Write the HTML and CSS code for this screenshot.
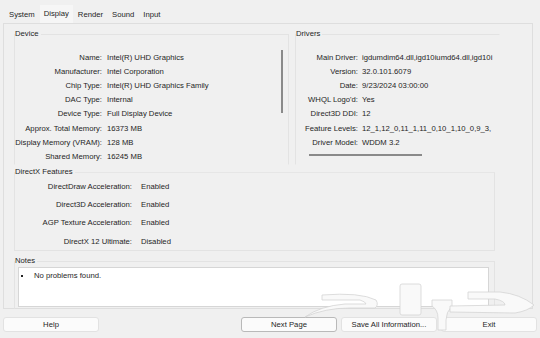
FILE: index.html
```html
<!DOCTYPE html>
<html lang="en">
<head>
    <meta charset="UTF-8">
    <meta name="viewport" content="width=device-width, initial-scale=1.0">
    <title>DirectX Diagnostic Tool</title>
    <link rel="stylesheet" href="styles.css">
</head>
<body>
    <div class="tabs">
        <span class="tab">System</span>
        <span class="tab active">Display</span>
        <span class="tab">Render</span>
        <span class="tab">Sound</span>
        <span class="tab">Input</span>
    </div>

    <div class="panel">
        <div class="top">
            <fieldset class="box device">
                <legend>Device</legend>
                <div class="boxBody">
                    <div class="rows">
                        <div class="row"><span class="lbl">Name:</span><span>Intel(R) UHD Graphics</span></div>
                        <div class="row"><span class="lbl">Manufacturer:</span><span>Intel Corporation</span></div>
                        <div class="row"><span class="lbl">Chip Type:</span><span>Intel(R) UHD Graphics Family</span></div>
                        <div class="row"><span class="lbl">DAC Type:</span><span>Internal</span></div>
                        <div class="row"><span class="lbl">Device Type:</span><span>Full Display Device</span></div>
                        <div class="row"><span class="lbl">Approx. Total Memory:</span><span>16373 MB</span></div>
                        <div class="row"><span class="lbl">Display Memory (VRAM):</span><span>128 MB</span></div>
                        <div class="row"><span class="lbl">Shared Memory:</span><span>16245 MB</span></div>
                    </div>
                    <div class="vscroll"></div>
                </div>
            </fieldset>

            <fieldset class="box drivers">
                <legend>Drivers</legend>
                <div class="rows">
                    <div class="row"><span class="lbl">Main Driver:</span><span>igdumdim64.dll,igd10iumd64.dll,igd10i</span></div>
                    <div class="row"><span class="lbl">Version:</span><span>32.0.101.6079</span></div>
                    <div class="row"><span class="lbl">Date:</span><span>9/23/2024 03:00:00</span></div>
                    <div class="row"><span class="lbl">WHQL Logo'd:</span><span>Yes</span></div>
                    <div class="row"><span class="lbl">Direct3D DDI:</span><span>12</span></div>
                    <div class="row"><span class="lbl">Feature Levels:</span><span>12_1,12_0,11_1,11_0,10_1,10_0,9_3,</span></div>
                    <div class="row"><span class="lbl">Driver Model:</span><span>WDDM 3.2</span></div>
                </div>
                <div class="hscroll"></div>
            </fieldset>
        </div>

        <fieldset class="box features">
            <legend>DirectX Features</legend>
            <div class="row"><span class="lbl">DirectDraw Acceleration:</span><span>Enabled</span></div>
            <div class="row"><span class="lbl">Direct3D Acceleration:</span><span>Enabled</span></div>
            <div class="row"><span class="lbl">AGP Texture Acceleration:</span><span>Enabled</span></div>
            <div class="row"><span class="lbl">DirectX 12 Ultimate:</span><span>Disabled</span></div>
        </fieldset>

        <fieldset class="box notes">
            <legend>Notes</legend>
            <div class="notesArea">
                <div class="note"><span class="bullet"></span>No problems found.</div>
            </div>
        </fieldset>
    </div>

    <div class="buttons">
        <button class="btn">Help</button>
        <button class="btn btnDefault">Next Page</button>
        <button class="btn">Save All Information...</button>
        <button class="btn">Exit</button>
    </div>

    <!-- watermark stamped over the screenshot -->
    <svg class="stamp" viewBox="0 0 240 60" width="240" height="60">
        <g fill="#f9f9f9" stroke="#d4d4d4" stroke-width="0.8">
            <path d="M5,39 Q25,30 50,30 L75,30 Q79,27 76,22 Q60,14 22,17 L22,22 L60,22 Q66,24 66,26 L45,26 Q20,28 5,39 Z"/>
            <rect x="100" y="6" width="21" height="31" rx="2"/>
            <path d="M132,22 L152,22 L152,28 Q146,34 146,42 L146,52 L138,52 L138,40 Q138,32 132,28 Z"/>
            <path d="M150,34 L215,35 Q228,33 234,27 Q220,16 200,14 L168,14 L168,21 L195,21 Q205,23 205,27 L150,28 Z"/>
        </g>
    </svg>
</body>
</html>
```

FILE: styles.css
```css
body {
    margin: 0;
    width: 540px;
    height: 338px;
    overflow: hidden;
    position: relative;
    background: #f0f0f0;
    color: #1e1e1e;
    font-family: "Liberation Sans", Arial, sans-serif;
    font-size: 7.7px;
}

.tabs {
    display: flex;
    align-items: flex-end;
    height: 23px;
    padding-left: 5px;
}
.tab {
    padding: 0 4px 3px;
    margin-right: 1px;
    line-height: 10px;
}
.tab.active {
    padding-bottom: 4px;
    padding-top: 4px;
    background: #f6f6f6;
}

.panel {
    box-sizing: border-box;
    margin-left: 3px;
    width: 530px;
    height: 286px;
    border: 1px solid #dedede;
    padding: 5px 0 0 10px;
}

.top {
    display: flex;
    height: 138px;
}

.box {
    margin: 0;
    padding: 0;
    min-width: 0;
    border: 1px solid #e3e3e3;
}
.box legend {
    padding: 0 2px 0 0;
    line-height: 10px;
}

.device {
    width: 275px;
    height: 136px;
    box-sizing: border-box;
    padding-top: 11px;
    border-bottom-color: transparent;
}
.boxBody {
    display: flex;
}
.rows {
    flex: 1;
    min-width: 0;
}
.vscroll {
    width: 2px;
    height: 63px;
    margin-right: 5px;
    background: #8a8a8a;
}

.drivers {
    margin-left: 6px;
    width: 205px;
    height: 136px;
    box-sizing: border-box;
    padding-top: 11px;
    border-bottom-color: transparent;
    border-right-color: transparent;
}
.hscroll {
    width: 113px;
    height: 2px;
    margin: 5px 0 0 13px;
    background: #8a8a8a;
}

.row {
    display: flex;
    height: 14.2px;
    align-items: center;
    white-space: nowrap;
}
.lbl {
    flex: none;
    width: 87px;
    margin-right: 5px;
    text-align: right;
}
.drivers .lbl {
    width: 62px;
    margin-right: 4px;
}

.features {
    width: 481px;
    box-sizing: border-box;
    border-top-color: #e6e6e6;
}
.features .row {
    height: 18.3px;
}
.features .lbl {
    width: 117px;
    margin-right: 9px;
}

.notes {
    margin-top: 5px;
    width: 481px;
    box-sizing: border-box;
    padding-bottom: 1px;
    border-bottom-color: transparent;
}
.notesArea {
    margin: 1px 0 0 3px;
    width: 471px;
    height: 40px;
    box-sizing: border-box;
    background: #fff;
    border: 1px solid #d6d6d6;
    padding: 3px 0 0 2px;
}
.note {
    display: flex;
    align-items: center;
    line-height: 10px;
}
.bullet {
    width: 2px;
    height: 2px;
    margin-right: 11px;
    background: #222;
}

.buttons {
    display: flex;
    gap: 4px;
    margin-top: 8px;
    padding: 0 3px;
}
.btn {
    width: 96px;
    height: 15px;
    padding: 0;
    background: #fbfbfb;
    border: 1px solid #e2e2e2;
    border-radius: 3px;
    color: #1e1e1e;
    font-family: inherit;
    font-size: 7.7px;
}
.btnDefault {
    margin-left: auto;
    border-color: #b9b9b9;
}

.stamp {
    position: absolute;
    left: 300px;
    top: 278px;
}
```
